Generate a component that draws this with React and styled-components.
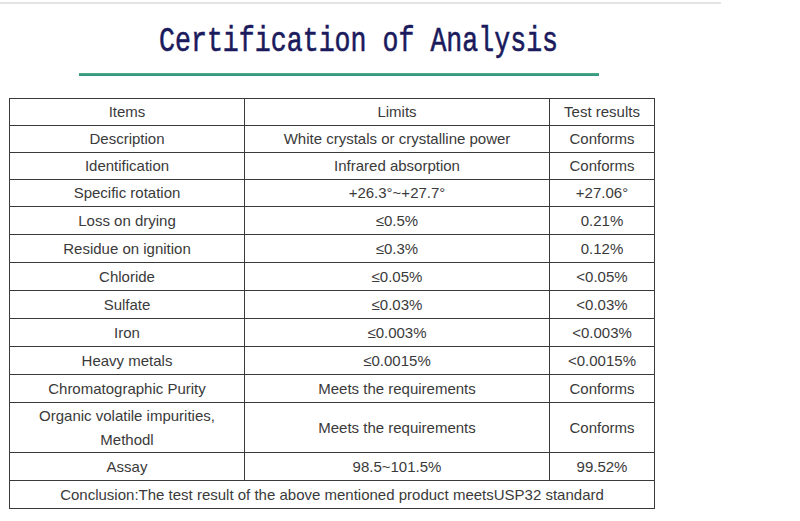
import React from "react";
import styled, { createGlobalStyle } from "styled-components";

const Global = createGlobalStyle`
  html, body { margin: 0; padding: 0; background: #fff; }
  body { font-family: "Liberation Sans", Arial, sans-serif; }
`;

const Page = styled.div`
  width: 800px;
  height: 521px;
  overflow: hidden;
  background: #fff;
`;

const TopRule = styled.div`
  width: 721px;
  height: 2px;
  margin-top: 2px;
  background: #e4e4e4;
`;

const TitleBar = styled.div`
  width: 718px;
  height: 48px;
  margin-top: 16px;
  display: flex;
  justify-content: center;
  align-items: flex-start;
  padding-top: 5px;
  box-sizing: border-box;
`;

const Title = styled.h1`
  margin: 0;
  font-family: "Liberation Mono", "Courier New", monospace;
  font-weight: normal;
  font-size: 35px;
  line-height: 1;
  color: #1a1a5c;
  white-space: nowrap;
  transform: scaleX(0.76);
  -webkit-text-stroke: 0.6px #1a1a5c;
`;

const GreenRule = styled.div`
  width: 520px;
  height: 3px;
  margin: 5px 0 0 79px;
  background: linear-gradient(#4fae7e, #2f8f86);
`;

const Table = styled.table`
  margin: 22px 0 0 9px;
  width: 646px;
  border-collapse: collapse;
  table-layout: fixed;
  font-size: 15px;
  color: #3a3a3a;
`;

const Row = styled.tr`
  height: ${(p) => p.$h}px;
`;

const Cell = styled.td`
  border: 1px solid #3a3a3a;
  padding: 0 4px;
  text-align: center;
  vertical-align: middle;
  line-height: 24px;
`;

const rows = [
  ["Items", "Limits", "Test results", 27],
  ["Description", "White crystals or crystalline power", "Conforms", 27],
  ["Identification", "Infrared absorption", "Conforms", 27],
  ["Specific rotation", "+26.3°~+27.7°", "+27.06°", 27],
  ["Loss on drying", "≤0.5%", "0.21%", 28],
  ["Residue on ignition", "≤0.3%", "0.12%", 28],
  ["Chloride", "≤0.05%", "<0.05%", 28],
  ["Sulfate", "≤0.03%", "<0.03%", 28],
  ["Iron", "≤0.003%", "<0.003%", 28],
  ["Heavy metals", "≤0.0015%", "<0.0015%", 28],
  ["Chromatographic Purity", "Meets the requirements", "Conforms", 28],
  [<>Organic volatile impurities,<br />Methodl</>, "Meets the requirements", "Conforms", 50],
  ["Assay", "98.5~101.5%", "99.52%", 28],
];

export default function App() {
  return (
    <Page>
      <Global />
      <TopRule />
      <TitleBar>
        <Title>Certification of Analysis</Title>
      </TitleBar>
      <GreenRule />
      <Table>
        <colgroup>
          <col style={{ width: 235 }} />
          <col style={{ width: 305 }} />
          <col style={{ width: 105 }} />
        </colgroup>
        <tbody>
          {rows.map((r, i) => (
            <Row key={i} $h={r[3]}>
              <Cell>{r[0]}</Cell>
              <Cell>{r[1]}</Cell>
              <Cell>{r[2]}</Cell>
            </Row>
          ))}
          <Row $h={28}>
            <Cell colSpan={3}>
              Conclusion:The test result of the above mentioned product meetsUSP32 standard
            </Cell>
          </Row>
        </tbody>
      </Table>
    </Page>
  );
}
